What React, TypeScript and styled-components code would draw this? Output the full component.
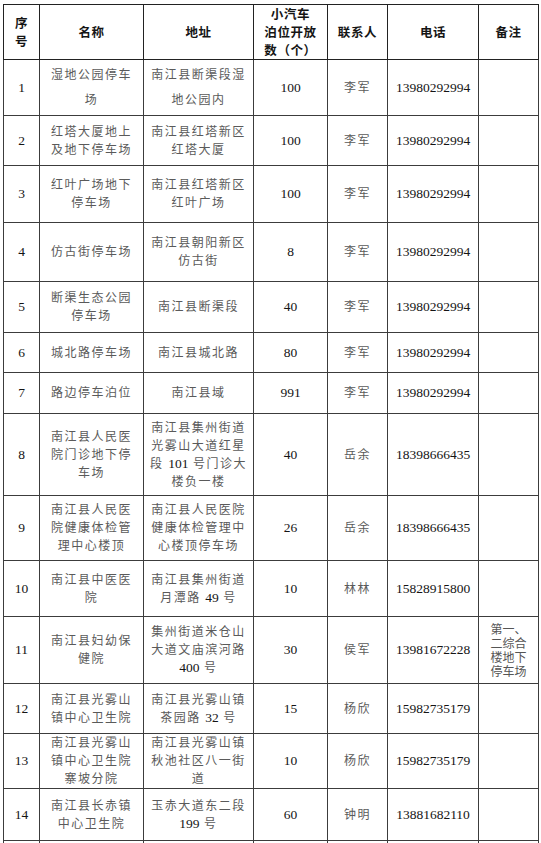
import React from "react";
import styled, { createGlobalStyle } from "styled-components";

interface Row {
  no: string;
  name: string[];
  addr: string[];
  count: string;
  contact: string;
  phone: string;
  remark?: string[];
  h: number;
  lh?: number;
}

const rows: Row[] = [
  { no: "1", name: ["湿地公园停车", "场"], addr: ["南江县断渠段湿", "地公园内"], count: "100", contact: "李军", phone: "13980292994", h: 56, lh: 25 },
  { no: "2", name: ["红塔大厦地上", "及地下停车场"], addr: ["南江县红塔新区", "红塔大厦"], count: "100", contact: "李军", phone: "13980292994", h: 50 },
  { no: "3", name: ["红叶广场地下", "停车场"], addr: ["南江县红塔新区", "红叶广场"], count: "100", contact: "李军", phone: "13980292994", h: 57 },
  { no: "4", name: ["仿古街停车场"], addr: ["南江县朝阳新区", "仿古街"], count: "8", contact: "李军", phone: "13980292994", h: 59 },
  { no: "5", name: ["断渠生态公园", "停车场"], addr: ["南江县断渠段"], count: "40", contact: "李军", phone: "13980292994", h: 51 },
  { no: "6", name: ["城北路停车场"], addr: ["南江县城北路"], count: "80", contact: "李军", phone: "13980292994", h: 40 },
  { no: "7", name: ["路边停车泊位"], addr: ["南江县域"], count: "991", contact: "李军", phone: "13980292994", h: 41 },
  { no: "8", name: ["南江县人民医", "院门诊地下停", "车场"], addr: ["南江县集州街道", "光雾山大道红星", "段 101 号门诊大", "楼负一楼"], count: "40", contact: "岳余", phone: "18398666435", h: 82 },
  { no: "9", name: ["南江县人民医", "院健康体检管", "理中心楼顶"], addr: ["南江县人民医院", "健康体检管理中", "心楼顶停车场"], count: "26", contact: "岳余", phone: "18398666435", h: 65 },
  { no: "10", name: ["南江县中医医", "院"], addr: ["南江县集州街道", "月潭路 49 号"], count: "10", contact: "林林", phone: "15828915800", h: 56 },
  { no: "11", name: ["南江县妇幼保", "健院"], addr: ["集州街道米仓山", "大道文庙滨河路", "400 号"], count: "30", contact: "侯军", phone: "13981672228", remark: ["第一、", "二综合", "楼地下", "停车场"], h: 67 },
  { no: "12", name: ["南江县光雾山", "镇中心卫生院"], addr: ["南江县光雾山镇", "茶园路 32 号"], count: "15", contact: "杨欣", phone: "15982735179", h: 50 },
  { no: "13", name: ["南江县光雾山", "镇中心卫生院", "寨坡分院"], addr: ["南江县光雾山镇", "秋池社区八一街", "道"], count: "10", contact: "杨欣", phone: "15982735179", h: 55 },
  { no: "14", name: ["南江县长赤镇", "中心卫生院"], addr: ["玉赤大道东二段", "199 号"], count: "60", contact: "钟明", phone: "13881682110", h: 52 },
];

const widths = [36, 104, 110, 74, 60, 91, 60];

const GlobalStyle = createGlobalStyle`
  html, body {
    margin: 0;
    padding: 0;
    background: #fff;
  }
  body {
    font-family: "Liberation Serif", "Noto Sans CJK SC", serif;
  }
`;

const Page = styled.div`
  box-sizing: border-box;
  width: 541px;
  height: 843px;
  padding: 4px 0 0 3px;
  overflow: hidden;
`;

const Table = styled.table`
  border-collapse: collapse;
  table-layout: fixed;
  width: 536px;
`;

const Col = styled.col<{ $w: number }>`
  width: ${(p) => p.$w}px;
`;

const HeadRow = styled.tr`
  height: 55px;
`;

const BodyRow = styled.tr<{ $h: number }>`
  height: ${(p) => p.$h}px;
`;

const HeadCell = styled.th`
  border: 1px solid #222;
  padding: 0 2px;
  font-family: "Noto Sans CJK SC", sans-serif;
  font-weight: 700;
  font-size: 12.5px;
  letter-spacing: 0.6px;
  line-height: 18px;
  color: #151515;
  text-align: center;
  vertical-align: middle;
`;

const TextCell = styled.td<{ $lh?: number }>`
  border: 1px solid #3c3c3c;
  padding: 0 4px;
  font-family: "Liberation Serif", "Noto Sans CJK SC", serif;
  font-size: 12px;
  letter-spacing: 1.5px;
  line-height: ${(p) => p.$lh ?? 18}px;
  color: #5a5a5a;
  text-align: center;
  vertical-align: middle;
`;

const NumCell = styled.td`
  border: 1px solid #3c3c3c;
  padding: 0;
  font-family: "Liberation Serif", serif;
  font-size: 13.5px;
  color: #141414;
  text-align: center;
  vertical-align: middle;
`;

const RemarkCell = styled.td`
  border: 1px solid #3c3c3c;
  padding: 0 2px;
  font-family: "Noto Sans CJK SC", sans-serif;
  font-size: 12px;
  line-height: 14px;
  color: #555;
  text-align: center;
  vertical-align: middle;
`;

const Num = styled.span`
  font-family: "Liberation Serif", serif;
  font-size: 13.5px;
  letter-spacing: 0;
  color: #141414;
`;

const Line = styled.div`
  white-space: nowrap;
`;

function Mixed({ text }: { text: string }) {
  const parts = text.split(/(\d+)/);
  return (
    <Line>
      {parts.map((part, i) =>
        /^\d+$/.test(part) ? <Num key={i}>{part}</Num> : <span key={i}>{part}</span>
      )}
    </Line>
  );
}

export default function App() {
  return (
    <Page>
      <GlobalStyle />
      <Table>
        <colgroup>
          {widths.map((w, i) => (
            <Col key={i} $w={w} />
          ))}
        </colgroup>
        <thead>
          <HeadRow>
            <HeadCell>
              序<br />号
            </HeadCell>
            <HeadCell>名称</HeadCell>
            <HeadCell>地址</HeadCell>
            <HeadCell>
              小汽车
              <br />
              泊位开放
              <br />
              数（个）
            </HeadCell>
            <HeadCell>联系人</HeadCell>
            <HeadCell>电话</HeadCell>
            <HeadCell>备注</HeadCell>
          </HeadRow>
        </thead>
        <tbody>
          {rows.map((row) => (
            <BodyRow key={row.no} $h={row.h}>
              <NumCell>{row.no}</NumCell>
              <TextCell $lh={row.lh}>
                {row.name.map((l, i) => (
                  <Mixed key={i} text={l} />
                ))}
              </TextCell>
              <TextCell $lh={row.lh}>
                {row.addr.map((l, i) => (
                  <Mixed key={i} text={l} />
                ))}
              </TextCell>
              <NumCell>{row.count}</NumCell>
              <TextCell>{row.contact}</TextCell>
              <NumCell>{row.phone}</NumCell>
              <RemarkCell>
                {row.remark?.map((l, i) => (
                  <Line key={i}>{l}</Line>
                ))}
              </RemarkCell>
            </BodyRow>
          ))}
          <BodyRow $h={40}>
            <NumCell />
            <TextCell />
            <TextCell />
            <NumCell />
            <TextCell />
            <NumCell />
            <RemarkCell />
          </BodyRow>
        </tbody>
      </Table>
    </Page>
  );
}
